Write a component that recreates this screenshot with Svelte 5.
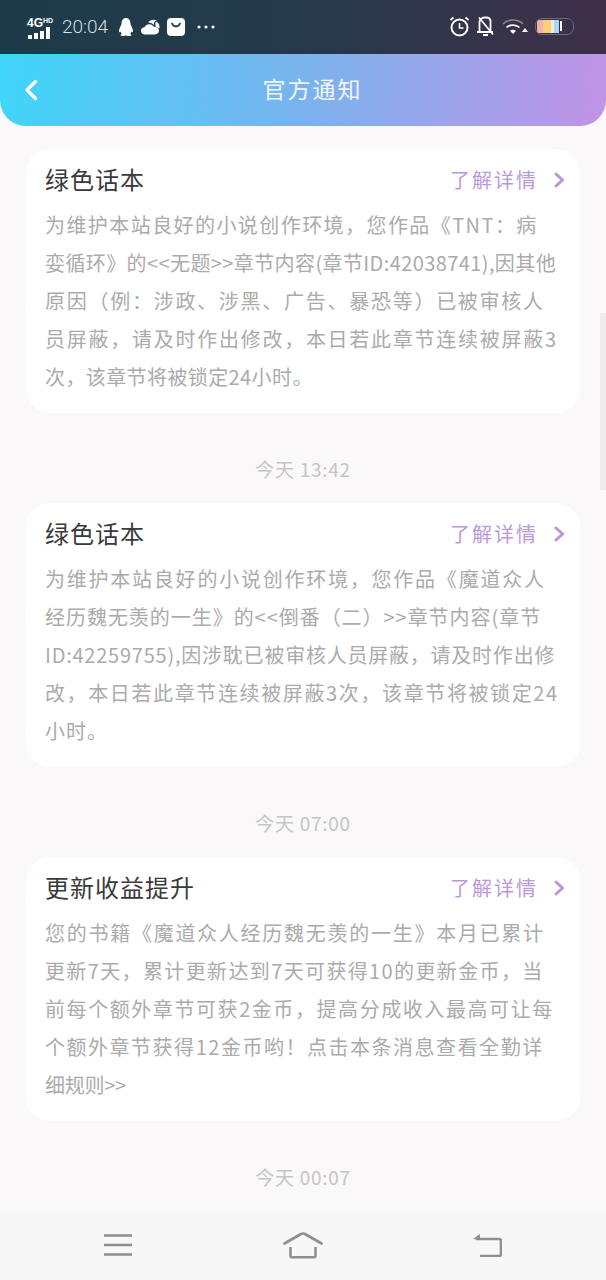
<script>
  // each line: text and the letter spacing that brings it to the reference's width
  const notices = [
    {
      title: "绿色话本",
      lines: [
        ["为维护本站良好的小说创作环境，您作品《TNT：病", 1.43],
        ["娈循环》的<<无题>>章节内容(章节ID:42038741),因其他", 0.4],
        ["原因（例：涉政、涉黑、广告、暴恐等）已被审核人", 1.73],
        ["员屏蔽，请及时作出修改，本日若此章节连续被屏蔽3", 1.74],
        ["次，该章节将被锁定24小时。", 0.4]
      ],
      time: "今天 13:42"
    },
    {
      title: "绿色话本",
      lines: [
        ["为维护本站良好的小说创作环境，您作品《魔道众人", 1.77],
        ["经历魏无羡的一生》的<<倒番（二）>>章节内容(章节", 0.96],
        ["ID:42259755),因涉耽已被审核人员屏蔽，请及时作出修", 0.77],
        ["改，本日若此章节连续被屏蔽3次，该章节将被锁定24", 1.62],
        ["小时。", 1]
      ],
      time: "今天 07:00"
    },
    {
      title: "更新收益提升",
      lines: [
        ["您的书籍《魔道众人经历魏无羡的一生》本月已累计", 1.73],
        ["更新7天，累计更新达到7天可获得10的更新金币，当", 1.37],
        ["前每个额外章节可获2金币，提高分成收入最高可让每", 1.57],
        ["个额外章节获得12金币哟！点击本条消息查看全勤详", 1.52],
        ["细规则>>", -0.25]
      ],
      time: "今天 00:07"
    }
  ];
</script>

<div class="page">
  <div class="status">
    <div class="status-left">
      <div class="network">
        <div class="net-label">4G<small>HD</small></div>
        <svg width="24" height="12" viewBox="0 0 24 12">
          <rect x="1" y="8" width="4" height="4" fill="#fff" />
          <rect x="7" y="6" width="4" height="6" fill="#fff" />
          <rect x="13" y="4" width="4" height="8" fill="#fff" />
          <rect x="19" y="0" width="4" height="12" fill="#fff" />
        </svg>
      </div>
      <span class="clock">20:04</span>
      <svg class="qq" width="16" height="20" viewBox="0 0 16 20">
        <path d="M8 1c3 0 4.500 2.500 4.500 5.500 0 1 .3 1.700.8 2.600.9 1.700 1.700 3.600 1.700 5.200 0 1-.6 1.200-1.600.2-.2 1.200-.6 2-1.300 2.600.9.300 1.400.7 1.400 1.100 0 .5-1.500.8-3.200.8-.9 0-1.700-.2-2.300-.5-.6.300-1.400.5-2.300.5-1.700 0-3.200-.3-3.200-.8 0-.4.500-.8 1.400-1.100-.7-.6-1.100-1.400-1.300-2.600-1 1-1.600.8-1.600-.2 0-1.600.8-3.500 1.700-5.200.5-.9.800-1.600.8-2.600C3.500 3.500 5 1 8 1z" fill="#fff" />
      </svg>
      <svg width="19" height="16" viewBox="0 0 19 16">
        <path d="M4 15.500C1.800 15.500 0 13.900 0 11.800c0-2 1.600-3.500 3.600-3.700C4.500 6.200 6.500 5 8.600 5.200c1.800.1 3.300 1.100 4.100 2.600 2.600-.4 5.300 1 5.300 3.800 0 2.200-1.700 3.900-4 3.900H4z" fill="#fff" />
        <path d="M7 3.500C9 .8 13 0 16 1.500c-2.500.2-3.500 2-3 4.500-1.500-1.800-3.800-2.800-6-2.500z" fill="#fff" />
        <path d="M15 2.500c2 .8 3.500 3 3.500 5.500 0 .5 0 1-.2 1.500-.8-.9-2-1.500-3.300-1.600-.8-2-.9-4 0-5.400z" fill="#fff" />
      </svg>
      <svg width="18" height="18" viewBox="0 0 18 18">
        <rect width="18" height="18" rx="4" fill="#fff" />
        <path d="M5 5.500c.8 2 2.200 3 4 3s3.200-1 4-3" fill="none" stroke="#24394b" stroke-width="1.800" stroke-linecap="round" />
      </svg>
      <svg class="more" width="18" height="4" viewBox="0 0 18 4">
        <circle cx="2" cy="2" r="1.600" fill="#fff" />
        <circle cx="9" cy="2" r="1.600" fill="#fff" />
        <circle cx="16" cy="2" r="1.600" fill="#fff" />
      </svg>
    </div>
    <div class="status-right">
      <svg width="21" height="21" viewBox="0 0 21 21" fill="none" stroke="#fff">
        <circle cx="10.500" cy="11.500" r="8" stroke-width="2" />
        <path d="M10.500 7v5h4" stroke-width="1.600" />
        <path d="M1.500 4l3-2.500M19.500 4l-3-2.500" stroke-width="1.800" />
      </svg>
      <svg width="19" height="21" viewBox="0 0 19 21" fill="none" stroke="#fff" stroke-width="1.800">
        <path d="M3.500 15.500V7c0-3 2-5.500 5-5.500h2c2 0 3.500 1 4 3v11" />
        <path d="M1 16h16M7 19h5" />
        <path d="M3 1.500l14 17" />
      </svg>
      <svg class="wifi" width="26" height="17" viewBox="0 0 26 17" fill="none">
        <path d="M1 6c5.500-5.300 14.500-5.300 20 0" stroke="#8d8994" stroke-width="1.500" />
        <path d="M4.500 9.500c3.500-3.300 9.500-3.300 13 0" stroke="#fff" stroke-width="1.700" />
        <path d="M8 12.800c1.800-1.500 4.200-1.500 6 0L11 16z" fill="#fff" />
        <path d="M20 14l3-4 3 4z" fill="#fff" />
      </svg>
      <div class="battery">
        <i class="seg pink"></i><i class="seg yellow"></i><i class="seg pale"></i><i class="seg blue"></i><i class="tick"></i>
      </div>
    </div>
  </div>

  <header class="top">
    <svg class="back" width="14" height="22" viewBox="0 0 14 22">
      <path d="M11.500 2.500L3 11l8.500 8.500" fill="none" stroke="#fff" stroke-width="3.200" stroke-linecap="round" stroke-linejoin="round" />
    </svg>
    <h1>官方通知</h1>
  </header>

  <main class="list">
    {#each notices as notice}
      <section class="card">
        <div class="card-head">
          <h2>{notice.title}</h2>
          <div class="more-link">
            <span>了解详情</span>
            <svg width="11" height="16" viewBox="0 0 11 16">
              <path d="M2 2l6.500 6L2 14" fill="none" stroke="#bb94dc" stroke-width="3" stroke-linecap="round" stroke-linejoin="round" />
            </svg>
          </div>
        </div>
        <div class="card-body">
          {#each notice.lines as [line, spacing]}
            <p style="letter-spacing: {spacing}px">{line}</p>
          {/each}
        </div>
      </section>
      <div class="time">{notice.time}</div>
    {/each}
  </main>

  <div class="scrollbar"></div>

  <nav class="bottom">
    <svg width="28" height="22" viewBox="0 0 28 22" stroke="#8f8f8f" stroke-width="2.600" fill="none">
      <path d="M0 1.500h28M0 11h28M0 20.500h28" />
    </svg>
    <svg width="40" height="27" viewBox="0 0 40 27" stroke="#8f8f8f" stroke-width="2.600" fill="none" stroke-linejoin="round">
      <path d="M1.500 11.500L18 2c1.500-.7 2.500-.7 4 0l16.500 9.500" stroke-linecap="round" />
      <path d="M7.500 15v8.500c0 1 .5 1.800 1.500 1.800h22c1 0 1.500-.8 1.500-1.800V15" />
    </svg>
    <svg width="29" height="24" viewBox="0 0 29 24" fill="none">
      <path d="M3 6h23c1 0 2 .7 2 2v13c0 1.300-1 2-2 2H7" stroke="#8f8f8f" stroke-width="2.600" />
      <path d="M0 6l7-5v6z" fill="#8f8f8f" />
    </svg>
  </nav>
</div>

<style>
  :global(body) {
    margin: 0;
  }

  .page {
    position: relative;
    width: 606px;
    height: 1280px;
    display: flex;
    flex-direction: column;
    overflow: hidden;
    background: #faf8f9;
    font-family: "Noto Sans CJK SC", "Noto Sans", sans-serif;
  }

  .status {
    flex: none;
    height: 54px;
    box-sizing: border-box;
    padding: 0 32px 1px 27px;
    display: flex;
    align-items: center;
    justify-content: space-between;
    background: linear-gradient(90deg, #1e3b4a, #243a4b 45%, #3e2f49);
  }

  .status-left,
  .status-right {
    display: flex;
    align-items: center;
  }

  .status-left {
    gap: 7px;
  }

  .status-right {
    gap: 7px;
  }

  .network {
    width: 29px;
    display: flex;
    flex-direction: column;
    gap: 0;
  }

  .net-label {
    height: 12px;
    font: 700 12px/12px "Liberation Sans", sans-serif;
    color: #fff;
    white-space: nowrap;
  }

  .net-label small {
    font-size: 7px;
    vertical-align: 4px;
  }

  .clock {
    font: 300 19px/24px Roboto, sans-serif;
    color: #d8dde1;
    margin-left: -1px;
    margin-right: 3px;
  }

  .more {
    margin-left: 5px;
  }

  .status-right svg:first-child {
    margin-right: -1px;
  }

  .battery {
    position: relative;
    width: 39px;
    height: 17px;
    box-sizing: border-box;
    padding: 1px;
    border: 1.500px solid #6f6a75;
    border-radius: 7px;
    display: flex;
    overflow: hidden;
  }

  .seg {
    display: block;
    height: 100%;
  }

  .pink {
    width: 6px;
    background: #f2b1ad;
  }

  .yellow {
    width: 8px;
    background: #fbd178;
  }

  .pale {
    width: 3px;
    background: #f3ead8;
  }

  .blue {
    width: 5px;
    background: #a9d6f3;
  }

  .tick {
    position: absolute;
    left: 24px;
    top: 2px;
    width: 1.500px;
    height: 10px;
    background: #fff;
  }

  .top {
    position: relative;
    flex: none;
    height: 72px;
    box-sizing: border-box;
    padding-bottom: 4px;
    display: flex;
    align-items: center;
    justify-content: center;
    border-radius: 0 0 26px 26px;
    background: linear-gradient(95deg, #3fd6f9, #7ab3ee 50%, #c193e6);
  }

  .back {
    position: absolute;
    left: 24px;
    top: 25px;
  }

  .top h1 {
    margin: 0 0 0 19px;
    font-size: 23px;
    font-weight: 400;
    letter-spacing: 2px;
    color: #eef6fd;
  }

  .list {
    flex: 1;
    min-height: 0;
    overflow: hidden;
    padding: 23px 26px 0;
  }

  .card {
    height: 264px;
    box-sizing: border-box;
    padding: 10px 15px 0 19px;
    border-radius: 24px;
    background: #fff;
  }

  .card-head {
    display: flex;
    justify-content: space-between;
    align-items: center;
    height: 38px;
  }

  .card-head h2 {
    margin: 0;
    font-size: 24px;
    font-weight: 400;
    letter-spacing: 1px;
    color: #3a3a3a;
  }

  .more-link {
    display: flex;
    align-items: center;
    gap: 16px;
    padding-top: 3px;
    color: #bb98dc;
    font-size: 20px;
    letter-spacing: 2px;
  }

  .card-body {
    margin-top: 9px;
  }

  .card-body p {
    margin: 0;
    height: 38px;
    font-size: 20px;
    line-height: 38px;
    white-space: nowrap;
    color: #ababab;
  }

  .time {
    height: 90px;
    display: flex;
    align-items: center;
    justify-content: center;
    padding-top: 20px;
    box-sizing: border-box;
    font-size: 19px;
    letter-spacing: 0.7px;
    color: #c6c4c6;
  }

  .scrollbar {
    position: absolute;
    left: 600px;
    top: 313px;
    width: 6px;
    height: 177px;
    background: #efecee;
  }

  .bottom {
    flex: none;
    height: 70px;
    box-sizing: border-box;
    padding: 0 104px;
    display: flex;
    align-items: center;
    justify-content: space-between;
    background: #f7f7f7;
  }
</style>
